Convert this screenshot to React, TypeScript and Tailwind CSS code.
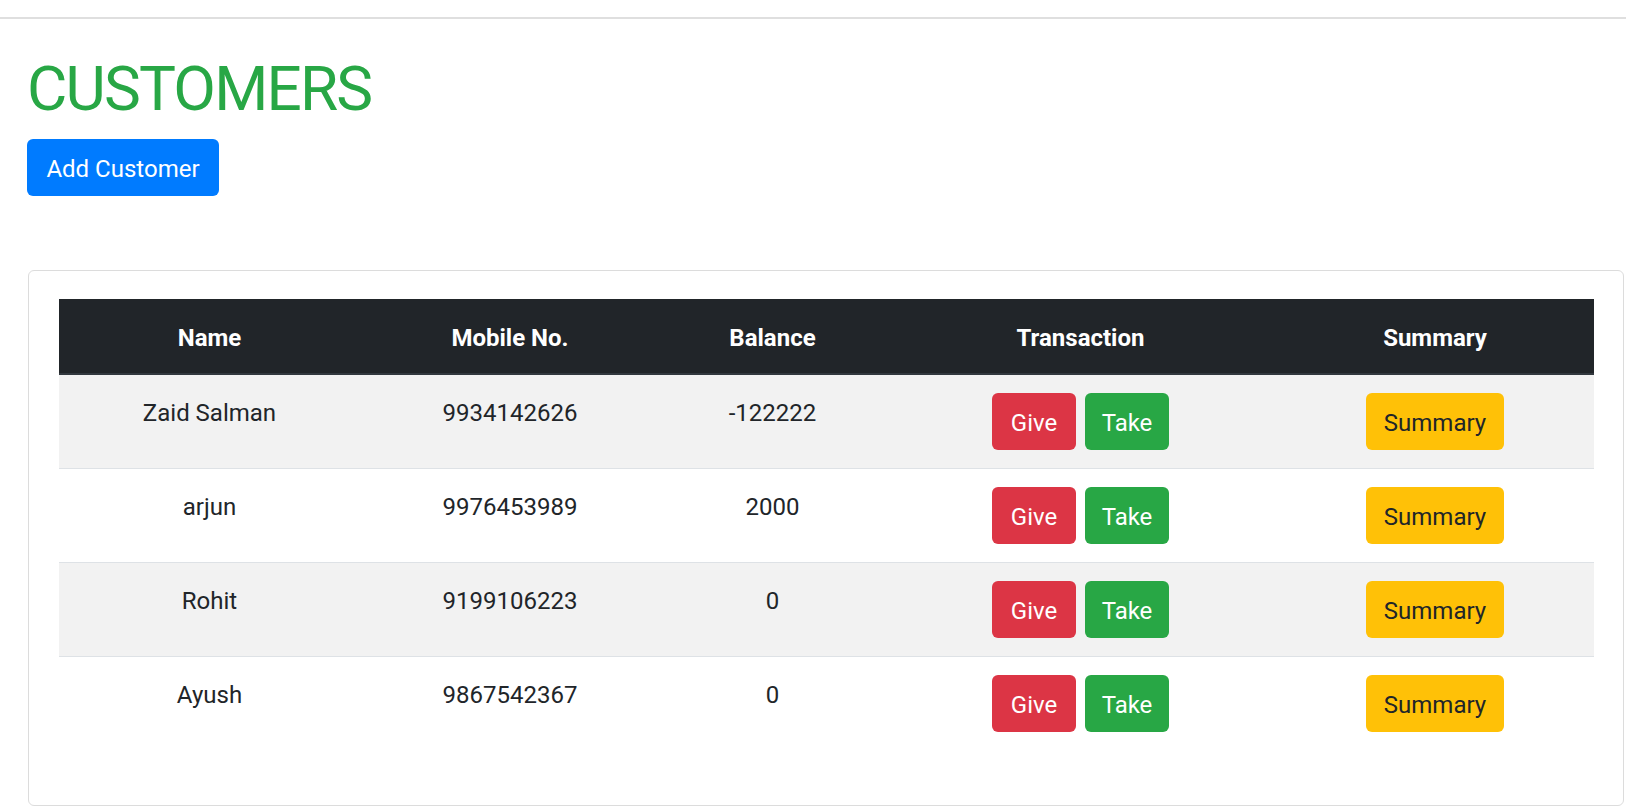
import React from 'react';

const customers = [
  { name: 'Zaid Salman', mobile: '9934142626', balance: '-122222' },
  { name: 'arjun', mobile: '9976453989', balance: '2000' },
  { name: 'Rohit', mobile: '9199106223', balance: '0' },
  { name: 'Ayush', mobile: '9867542367', balance: '0' },
];

const font = { fontFamily: 'Roboto, "Liberation Sans", sans-serif' };

export default function App() {
  return (
    <div className="min-h-screen bg-white text-[#212529]" style={font}>
      <div className="h-[19px] border-b-2 border-[#dfdfdf]" />
      <div className="pl-[27px]">
        <h1 className="mt-[34px] text-[62px] leading-[72px] font-normal tracking-[-1.8px] text-[#28a745]">CUSTOMERS</h1>
        <button className="mt-[14px] h-[57px] w-[192px] rounded-[6px] bg-[#007bff] pt-[2px] text-[24px] leading-[36px] text-white">
          Add Customer
        </button>
      </div>

      <div className="mt-[74px] ml-[28px] mr-[2px] rounded-[6px] border border-[#dcdcdc] px-[30px] pt-[28px] pb-[55px]">
        <table className="w-full table-fixed border-collapse text-[24px]">
          <colgroup>
            <col className="w-[301px]" />
            <col className="w-[300px]" />
            <col className="w-[225px]" />
            <col className="w-[391px]" />
            <col className="w-[318px]" />
          </colgroup>
          <thead>
            <tr className="bg-[#212529] text-white">
              {['Name', 'Mobile No.', 'Balance', 'Transaction', 'Summary'].map((h) => (
                <th key={h} className="border-b-2 border-[#32383e] pt-[21px] pb-[17px] text-center font-bold leading-[36px]">
                  {h}
                </th>
              ))}
            </tr>
          </thead>
          <tbody>
            {customers.map((c, i) => (
              <tr key={c.mobile} className={`border-t border-[#dee2e6] ${i % 2 === 0 ? 'bg-[#f2f2f2]' : 'bg-white'}`}>
                <td className="px-[18px] py-[18px] text-center align-top leading-[40px]">{c.name}</td>
                <td className="px-[18px] py-[18px] text-center align-top leading-[40px]">{c.mobile}</td>
                <td className="px-[18px] py-[18px] text-center align-top leading-[40px]">{c.balance}</td>
                <td className="px-[18px] py-[18px] align-top">
                  <div className="flex justify-center gap-[9px]">
                    <button className="h-[57px] w-[84px] rounded-[6px] bg-[#dc3545] pt-[3px] leading-[36px] text-white">Give</button>
                    <button className="h-[57px] w-[84px] rounded-[6px] bg-[#28a745] pt-[3px] leading-[36px] text-white">Take</button>
                  </div>
                </td>
                <td className="px-[18px] py-[18px] align-top">
                  <div className="flex justify-center">
                    <button className="h-[57px] w-[138px] rounded-[6px] bg-[#ffc107] pt-[3px] leading-[36px] text-[#212529]">Summary</button>
                  </div>
                </td>
              </tr>
            ))}
          </tbody>
        </table>
      </div>
    </div>
  );
}
